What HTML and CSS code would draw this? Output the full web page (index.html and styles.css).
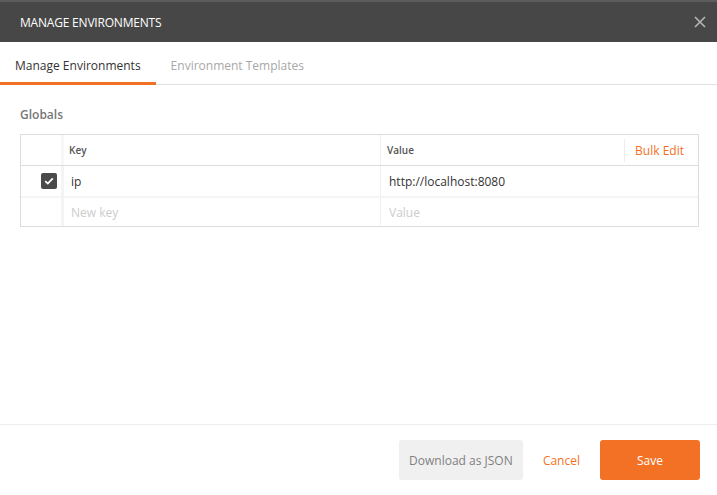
FILE: index.html
```html
<!DOCTYPE html>
<html lang="en">
<head>
  <meta charset="UTF-8">
  <meta name="viewport" content="width=device-width, initial-scale=1.0">
  <title>Manage Environments</title>
  <link rel="stylesheet" href="styles.css">
</head>
<body>
  <div class="modal">
    <div class="modal-header">
      <span class="modal-title">MANAGE ENVIRONMENTS</span>
      <svg class="close" width="12" height="12" viewBox="0 0 12 12">
        <path d="M1 1L11 11M11 1L1 11" stroke="#b5b5b5" stroke-width="1.6"/>
      </svg>
    </div>

    <div class="tabs">
      <div class="tab active">Manage Environments</div>
      <div class="tab">Environment Templates</div>
    </div>

    <div class="modal-body">
      <div class="section-title">Globals</div>
      <div class="kv-table">
        <div class="kv-row kv-head">
          <div class="cell cell-check"></div>
          <div class="cell cell-key">Key</div>
          <div class="cell cell-value">
            <span>Value</span>
            <span class="bulk">Bulk Edit</span>
          </div>
        </div>
        <div class="kv-row">
          <div class="cell cell-check">
            <span class="checkbox">
              <svg width="10" height="8" viewBox="0 0 10 8">
                <path d="M1.2 4.2L3.8 6.6L8.8 1.4" fill="none" stroke="#fff" stroke-width="1.8"/>
              </svg>
            </span>
          </div>
          <div class="cell cell-key">ip</div>
          <div class="cell cell-value">http://localhost:8080</div>
        </div>
        <div class="kv-row kv-new">
          <div class="cell cell-check"></div>
          <div class="cell cell-key placeholder">New key</div>
          <div class="cell cell-value placeholder">Value</div>
        </div>
      </div>
    </div>

    <div class="modal-footer">
      <button class="btn btn-grey">Download as JSON</button>
      <button class="btn btn-link">Cancel</button>
      <button class="btn btn-primary">Save</button>
    </div>
  </div>
</body>
</html>
```

FILE: styles.css
```css
* {
  box-sizing: border-box;
}
body {
  margin: 0;
  padding: 0;
  background-color: #fff;
  font-family: "Open Sans", "Liberation Sans", sans-serif;
  color: #333;
}
.modal {
  width: 717px;
  height: 495px;
  display: flex;
  flex-direction: column;
  background-color: #fff;
}
.modal-header {
  height: 42px;
  border-top: 2px solid #5c5c5c;
  background-color: #474747;
  display: flex;
  align-items: center;
  justify-content: space-between;
  padding: 0 11px 0 20px;
}
.modal-title {
  color: #fff;
  font-size: 12px;
  letter-spacing: -0.2px;
}
.close {
  display: block;
}
.tabs {
  display: flex;
  height: 43px;
  border-bottom: 1px solid #e0e0e0;
}
.tab {
  padding: 0 15px 8px;
  display: flex;
  align-items: flex-end;
  font-size: 12px;
  color: #a8a8a8;
  border-bottom: 3px solid transparent;
  margin-bottom: -1px;
}
.tab.active {
  color: #333;
  border-bottom-color: #f37125;
}
.modal-body {
  flex: 1;
  padding: 21px 18px 0 20px;
}
.section-title {
  font-size: 12px;
  font-weight: 600;
  color: #777;
  margin-bottom: 11px;
}
.kv-table {
  border: 1px solid #dcdcdc;
}
.kv-row {
  display: flex;
  height: 30px;
  border-top: 2px solid #f4f4f4;
}
.kv-head {
  height: 31px;
  border-top: none;
  border-bottom: 1px solid #dcdcdc;
}
.kv-head + .kv-row {
  border-top: none;
}
.cell {
  display: flex;
  align-items: center;
  font-size: 12px;
}
.cell-check {
  width: 43px;
  justify-content: flex-end;
  border-right: 3px solid #f4f4f4;
}
.cell-key {
  width: 317px;
  padding-left: 7px;
  border-right: 1px solid #f0f0f0;
}
.cell-value {
  flex: 1;
  padding-left: 8px;
  justify-content: space-between;
}
.kv-head .cell {
  font-size: 10px;
  font-weight: 600;
  color: #555;
}
.kv-head .cell-key {
  padding-left: 5px;
}
.kv-head .cell-value {
  padding-left: 6px;
}
.kv-head .cell-check {
  border-right-color: #f7f7f7;
}
.kv-head .bulk {
  font-size: 12px;
  font-weight: 400;
  color: #f37125;
  padding: 3px 14px 3px 10px;
  border-left: 1px solid #eee;
}
.checkbox {
  width: 16px;
  height: 16px;
  border-radius: 2px;
  background-color: #4a4a4a;
  display: flex;
  align-items: center;
  justify-content: center;
  margin-right: 4px;
}
.placeholder {
  color: #ccc;
}
.modal-footer {
  height: 71px;
  border-top: 1px solid #eee;
  display: flex;
  align-items: center;
  justify-content: flex-end;
  padding: 0 17px 0 0;
}
.btn {
  font-family: inherit;
  font-size: 12px;
  border: none;
  border-radius: 3px;
  height: 40px;
  cursor: pointer;
}
.btn-grey {
  width: 124px;
  background-color: #f0f0f0;
  color: #808080;
}
.btn-link {
  background: none;
  color: #f37125;
  padding: 0 20px;
}
.btn-primary {
  width: 100px;
  background-color: #f37125;
  color: #fff;
}
```
